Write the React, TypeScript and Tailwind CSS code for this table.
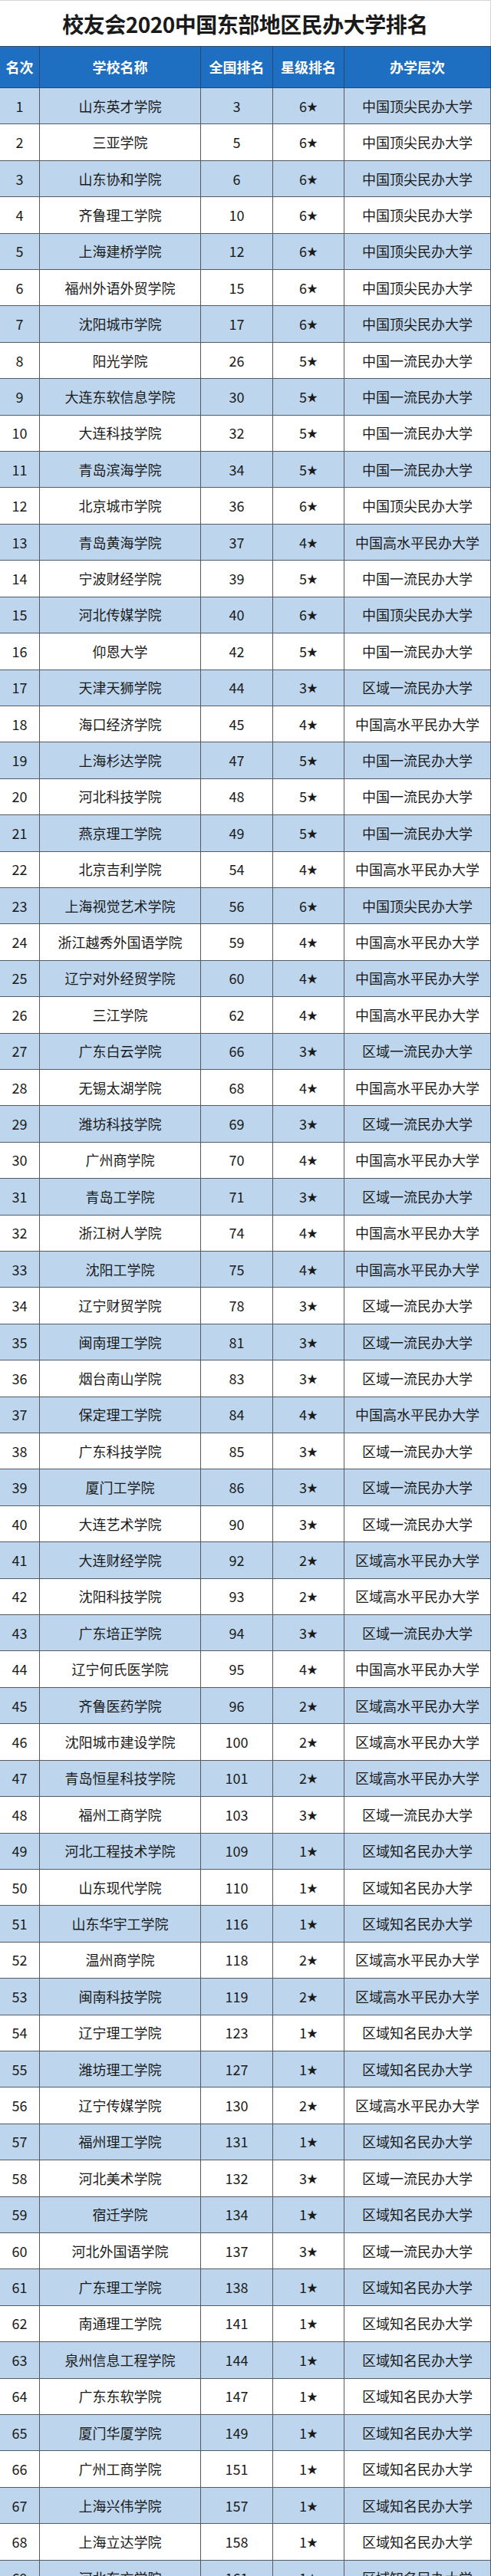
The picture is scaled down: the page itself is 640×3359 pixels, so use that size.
import React from 'react';

type Row = [number, string, number, number, number];

// 办学层次
const LEVELS = [
  '中国顶尖民办大学',
  '中国一流民办大学',
  '中国高水平民办大学',
  '区域一流民办大学',
  '区域高水平民办大学',
  '区域知名民办大学',
];

// [名次, 学校名称, 全国排名, 星级, 层次索引]
const ROWS: Row[] = [
  [1, '山东英才学院', 3, 6, 0],
  [2, '三亚学院', 5, 6, 0],
  [3, '山东协和学院', 6, 6, 0],
  [4, '齐鲁理工学院', 10, 6, 0],
  [5, '上海建桥学院', 12, 6, 0],
  [6, '福州外语外贸学院', 15, 6, 0],
  [7, '沈阳城市学院', 17, 6, 0],
  [8, '阳光学院', 26, 5, 1],
  [9, '大连东软信息学院', 30, 5, 1],
  [10, '大连科技学院', 32, 5, 1],
  [11, '青岛滨海学院', 34, 5, 1],
  [12, '北京城市学院', 36, 6, 0],
  [13, '青岛黄海学院', 37, 4, 2],
  [14, '宁波财经学院', 39, 5, 1],
  [15, '河北传媒学院', 40, 6, 0],
  [16, '仰恩大学', 42, 5, 1],
  [17, '天津天狮学院', 44, 3, 3],
  [18, '海口经济学院', 45, 4, 2],
  [19, '上海杉达学院', 47, 5, 1],
  [20, '河北科技学院', 48, 5, 1],
  [21, '燕京理工学院', 49, 5, 1],
  [22, '北京吉利学院', 54, 4, 2],
  [23, '上海视觉艺术学院', 56, 6, 0],
  [24, '浙江越秀外国语学院', 59, 4, 2],
  [25, '辽宁对外经贸学院', 60, 4, 2],
  [26, '三江学院', 62, 4, 2],
  [27, '广东白云学院', 66, 3, 3],
  [28, '无锡太湖学院', 68, 4, 2],
  [29, '潍坊科技学院', 69, 3, 3],
  [30, '广州商学院', 70, 4, 2],
  [31, '青岛工学院', 71, 3, 3],
  [32, '浙江树人学院', 74, 4, 2],
  [33, '沈阳工学院', 75, 4, 2],
  [34, '辽宁财贸学院', 78, 3, 3],
  [35, '闽南理工学院', 81, 3, 3],
  [36, '烟台南山学院', 83, 3, 3],
  [37, '保定理工学院', 84, 4, 2],
  [38, '广东科技学院', 85, 3, 3],
  [39, '厦门工学院', 86, 3, 3],
  [40, '大连艺术学院', 90, 3, 3],
  [41, '大连财经学院', 92, 2, 4],
  [42, '沈阳科技学院', 93, 2, 4],
  [43, '广东培正学院', 94, 3, 3],
  [44, '辽宁何氏医学院', 95, 4, 2],
  [45, '齐鲁医药学院', 96, 2, 4],
  [46, '沈阳城市建设学院', 100, 2, 4],
  [47, '青岛恒星科技学院', 101, 2, 4],
  [48, '福州工商学院', 103, 3, 3],
  [49, '河北工程技术学院', 109, 1, 5],
  [50, '山东现代学院', 110, 1, 5],
  [51, '山东华宇工学院', 116, 1, 5],
  [52, '温州商学院', 118, 2, 4],
  [53, '闽南科技学院', 119, 2, 4],
  [54, '辽宁理工学院', 123, 1, 5],
  [55, '潍坊理工学院', 127, 1, 5],
  [56, '辽宁传媒学院', 130, 2, 4],
  [57, '福州理工学院', 131, 1, 5],
  [58, '河北美术学院', 132, 3, 3],
  [59, '宿迁学院', 134, 1, 5],
  [60, '河北外国语学院', 137, 3, 3],
  [61, '广东理工学院', 138, 1, 5],
  [62, '南通理工学院', 141, 1, 5],
  [63, '泉州信息工程学院', 144, 1, 5],
  [64, '广东东软学院', 147, 1, 5],
  [65, '厦门华厦学院', 149, 1, 5],
  [66, '广州工商学院', 151, 1, 5],
  [67, '上海兴伟学院', 157, 1, 5],
  [68, '上海立达学院', 158, 1, 5],
  [69, '河北东方学院', 161, 1, 5],
];

const COLS = 'grid grid-cols-[52px_210px_94px_93px_191px]';
const HEADERS = ['名次', '学校名称', '全国排名', '星级排名', '办学层次'];

const App: React.FC = () => {
  return (
    <div
      className="w-[640px] h-[3359px] overflow-hidden bg-white text-[#1a1a1a]"
      style={{ fontFamily: '"Noto Sans CJK SC", "Noto Sans", sans-serif' }}
    >
      {/* 标题 */}
      <div className="h-[60px] flex items-center justify-center border-t border-r border-[#d4d4d4]">
        <h1 className="text-[28px] font-bold tracking-[-0.5px] leading-none">校友会2020中国东部地区民办大学排名</h1>
      </div>

      {/* 表头 */}
      <div className={`${COLS} h-[55px] bg-[#1e6fc2] border-y border-[#2b4a6b] text-white text-[18px] font-bold`}>
        {HEADERS.map((h) => (
          <div key={h} className="flex items-center justify-center border-r border-[#2b4a6b]">{h}</div>
        ))}
      </div>

      {/* 数据 */}
      {ROWS.map(([rank, name, national, star, level]) => (
        <div
          key={rank}
          className={`${COLS} h-[47.41px] border-b border-[#555a60] text-[18px] ${rank % 2 === 1 ? 'bg-[#bdd6ee]' : 'bg-white'}`}
        >
          <div className="flex items-center justify-center border-r border-[#555a60]">{rank}</div>
          <div className="flex items-center justify-center border-r border-[#555a60]">{name}</div>
          <div className="flex items-center justify-center border-r border-[#555a60]">{national}</div>
          <div className="flex items-center justify-center border-r border-[#555a60]">
            {star}<span className="text-[14px]">★</span>
          </div>
          <div className="flex items-center justify-center border-r border-[#555a60]">{LEVELS[level]}</div>
        </div>
      ))}
    </div>
  );
};

export default App;
